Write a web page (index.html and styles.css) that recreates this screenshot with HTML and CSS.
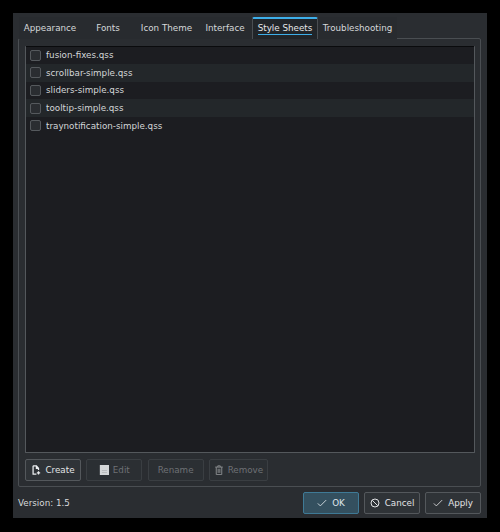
FILE: index.html
```html
<!DOCTYPE html>
<html lang="en">
<head>
<meta charset="utf-8">
<title>Style Sheets</title>
<link rel="stylesheet" href="styles.css">
</head>
<body>
<div class="window">
  <div class="tabs">
    <div class="tab t1">Appearance</div>
    <div class="tab t2">Fonts</div>
    <div class="tab t3">Icon Theme</div>
    <div class="tab t4">Interface</div>
    <div class="tab active"><span>Style Sheets</span></div>
    <div class="tab t6">Troubleshooting</div>
  </div>
  <div class="pane">
    <div class="list">
      <div class="row"><i class="check"></i>fusion-fixes.qss</div>
      <div class="row alt"><i class="check"></i>scrollbar-simple.qss</div>
      <div class="row"><i class="check"></i>sliders-simple.qss</div>
      <div class="row alt"><i class="check"></i>tooltip-simple.qss</div>
      <div class="row"><i class="check"></i>traynotification-simple.qss</div>
    </div>
    <div class="actions">
      <button class="btn act">
        <svg class="ico" viewBox="0 0 12 12" fill="none" stroke="#eceef0" stroke-width="1.5"><path d="M2.500 1h4l2.500 3v2M2.500 1v10h4M6.500 1v3h2.500"/><path d="M9 7.500v4M7 9.500h4"/></svg>
        Create
      </button>
      <button class="btn act off">
        <svg class="ico" viewBox="0 0 12 12"><rect x="1" y="0" width="11" height="12" fill="#d4d6d8"/><rect x="3.500" y="6" width="6" height="1" fill="#b4b6b8"/><rect x="3.500" y="8.500" width="6" height="1" fill="#b4b6b8"/></svg>
        Edit
      </button>
      <button class="btn act off">Rename</button>
      <button class="btn act off wide">
        <svg class="ico" viewBox="0 0 12 12" fill="none" stroke="#85888b" stroke-width="1.200"><path d="M1.500 2.500h9M4.500 2.500v-1.500h3v1.500M2.700 2.500v9h6.600v-9M5 4.500v5M7 4.500v5"/></svg>
        Remove
      </button>
    </div>
  </div>
  <div class="footer">
    <div class="version">Version: 1.5</div>
    <div class="dialog">
      <button class="btn dlg ok">
        <svg class="ico" viewBox="0 0 12 12" fill="none" stroke="#d5dde2" stroke-width="1.100"><path d="M1 6.500l3 3 7-7"/></svg>
        OK
      </button>
      <button class="btn dlg">
        <svg class="ico" viewBox="0 0 12 12" fill="none" stroke="#e0e2e4" stroke-width="1.200"><circle cx="6" cy="6" r="4.800"/><path d="M2.700 2.700l6.600 6.600"/></svg>
        Cancel
      </button>
      <button class="btn dlg">
        <svg class="ico" viewBox="0 0 12 12" fill="none" stroke="#d5d7d9" stroke-width="1.100"><path d="M1 6.500l3 3 7-7"/></svg>
        Apply
      </button>
    </div>
  </div>
</div>
</body>
</html>
```
FILE: styles.css
```css
* { box-sizing: border-box; }
html, body { margin: 0; height: 100%; background: #000; }
body { padding: 13px 13px 14px 13px; font-family: "DejaVu Sans", sans-serif; font-size: 8.75px; color: #e2e4e6; }
.window { width: 474px; height: 505px; background: #2a2d31; display: flex; flex-direction: column; padding: 4px 6px 0 5px; }
.tabs { display: flex; height: 22px; padding-left: 1px; align-items: stretch; position: relative; margin-bottom: -1px; }
.tab { display: flex; align-items: center; justify-content: center; color: #d6d8da; background: #282b2f; }
.t1 { width: 62px; }
.t2 { width: 54px; }
.t3 { width: 63px; }
.t4 { width: 54px; }
.t6 { width: 79px; }
.tab.active { width: 66px; background: #212529; border: 1px solid #4a4e52; border-top: 2px solid #3daee9; border-bottom: 0; border-radius: 2px 2px 0 0; position: relative; z-index: 1; color: #e6e8ea; }
.tab.active span { border-bottom: 1px solid #3daee9; line-height: 11px; }
.pane { height: 449px; border: 1px solid #4a4e52; border-radius: 2px; padding: 7px 5px 0 6px; display: flex; flex-direction: column; }
.list { height: 407px; background: #1c1d21; border: 1px solid #54585c; border-top: 0; box-shadow: inset 0 1px 0 #0a0b0d; border-radius: 1px; padding-top: 0.5px; }
.row { height: 17.6px; display: flex; align-items: center; padding-left: 3.5px; gap: 5.5px; color: #d4d6d8; }
.alt { background: #23272a; }
.check { width: 11px; height: 11px; border: 1px solid #55595d; border-radius: 2px; background: #2a2d31; flex: none; }
.actions { display: flex; gap: 5.3px; margin-top: 6px; }
.btn { font: inherit; color: #e2e4e6; background: #2f3337; border: 1px solid #54585c; border-radius: 2px; display: flex; align-items: center; justify-content: center; gap: 4px; padding: 0; }
.act { width: 56px; height: 22px; }
.wide { width: 59px; }
.off { color: #6e7175; border-color: #3a3e42; background: #2b2f33; }
.ico { width: 10px; height: 10px; flex: none; }
.footer { display: flex; justify-content: space-between; align-items: center; margin-top: 5px; height: 22px; }
.version { color: #d8dadc; }
.dialog { display: flex; gap: 5px; }
.dlg { width: 56px; height: 22px; gap: 5px; }
.ok { background: #34505f; border-color: #3f7a96; color: #dfe6ea; }
```
